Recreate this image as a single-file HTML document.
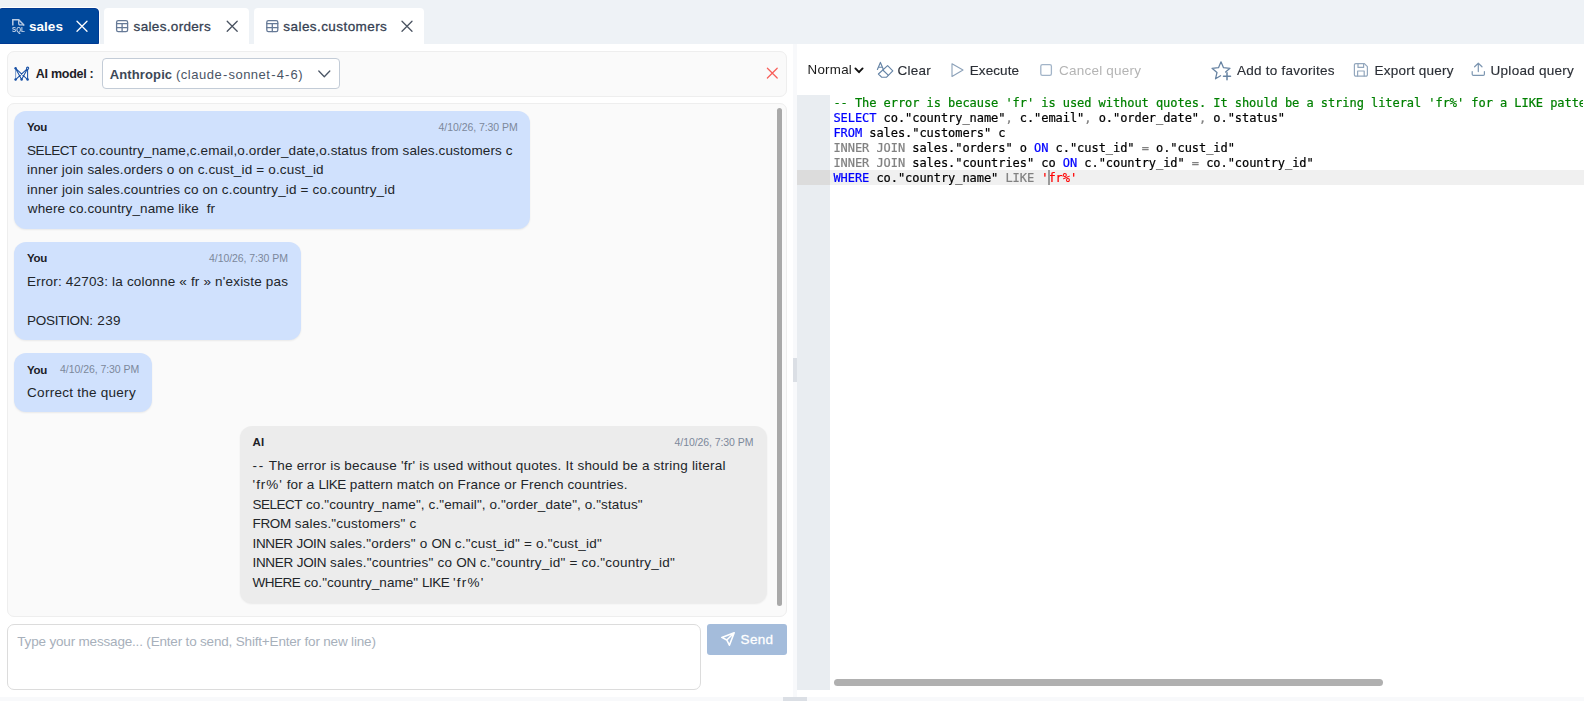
<!DOCTYPE html>
<html lang="en">
<head>
<meta charset="utf-8">
<title>sales - SQL console</title>
<style>
*{box-sizing:border-box;margin:0;padding:0}
html,body{width:1584px;height:704px;overflow:hidden;background:#fff}
body{font-family:"Liberation Sans",Arial,sans-serif;color:#212529;position:relative}
#app{position:absolute;left:0;top:0;width:1584px;height:704px;overflow:hidden;background:#fff}
.abs,.tx,svg.ic{position:absolute}
.tx{white-space:pre;line-height:1;display:block}
svg.ic{left:0;top:0;width:1584px;height:704px;overflow:visible;pointer-events:none}
.tabbar{position:absolute;left:0;top:0;width:1584px;height:44px;background:#eef2f6}
.tab{position:absolute;top:8px;height:36px;background:#fff;border-radius:4px 4px 0 0}
.tab.active{background:#00489b;border:1px solid #003a93;box-shadow:0 0 0 1px #fff}
.panel{position:absolute;background:#fafafa;border:1px solid #eeeeee;border-radius:7px}
.select{position:absolute;left:94px;top:6px;width:238px;height:31px;background:#fff;border:1px solid #c3ccd7;border-radius:4px}
.bubble{position:absolute;border-radius:12px;box-shadow:0 1px 2px rgba(0,0,0,.07)}
.bubble.you{background:#d0e1fd}
.bubble.ai{background:#ececec}
.vscroll{position:absolute;left:777px;top:108px;width:5px;height:498px;border-radius:3px;background:#a9a9a9}
.input{position:absolute;left:7px;top:624px;width:694px;height:66px;background:#fff;border:1px solid #dcdcdc;border-radius:7px}
.sendbtn{position:absolute;left:707px;top:624px;width:80px;height:31px;background:#a4bcdb;border-radius:3px}
.vsplit{position:absolute;left:793px;top:44px;width:4px;height:653px;background:#f8f9fb}
.vsplit i{position:absolute;left:0;top:314px;width:4px;height:24px;background:#dbdfe5}
.hsplit{position:absolute;left:0;top:697px;width:1584px;height:4px;background:#f8f9fb}
.hsplit i{position:absolute;left:783px;top:0;width:24px;height:4px;background:#dbdfe5}
.rightpane{position:absolute;left:0;top:0;width:1584px;height:704px;will-change:transform}
.toolbar{position:absolute;left:797px;top:44px;width:787px;height:51px}
.gutter{position:absolute;left:797px;top:95px;width:33px;height:595px;background:#e9edf1}
.gutter i{position:absolute;left:0;top:75px;width:33px;height:15px;background:#dcdcdc}
.activeline{position:absolute;left:830px;top:170px;width:754px;height:15px;background:#f0f0f0}
.code{position:absolute;left:833.4px;top:96px;letter-spacing:-0.057px;-webkit-text-stroke:0.22px;font-family:"DejaVu Sans Mono","Liberation Mono",monospace;font-size:12px;line-height:15px;white-space:pre;color:#000;width:750px;overflow:hidden}
.code div{height:15px}
.k{color:#0000ff}.g{color:#808080}.c{color:#008000}.s{color:#ff0000}
.cursor{position:absolute;left:1048px;top:170px;width:2px;height:15px;background:#9a9a9a}
.hscroll{position:absolute;left:834px;top:679px;width:549px;height:7px;border-radius:4px;background:#b0b0b0}
</style>
</head>
<body>
<div id="app">
  <!-- tab bar -->
  <div class="tabbar">
    <div class="tab active" style="left:-2px;width:101px"><span id="tab1" class="tx" style="left:30.08px;top:10.57px;font-size:13.5px;font-weight:700;color:#ffffff;letter-spacing:0.009px">sales</span></div>
    <div class="tab" style="left:104px;width:145px"><span id="tab2" class="tx" style="left:29.60px;top:11.57px;font-size:13.5px;font-weight:400;color:#364152;letter-spacing:0.323px;-webkit-text-stroke:0.3px">sales.orders</span></div>
    <div class="tab" style="left:254px;width:170px"><span id="tab3" class="tx" style="left:29.35px;top:11.57px;font-size:13.5px;font-weight:400;color:#364152;letter-spacing:0.427px;-webkit-text-stroke:0.3px">sales.customers</span></div>
  </div>

  <!-- left: AI assistant -->
  <div class="panel" style="left:7px;top:51px;width:780px;height:46px"><span id="ailabel" class="tx" style="left:27.85px;top:16.42px;font-size:12.5px;font-weight:700;color:#1d2127;letter-spacing:-0.278px">AI model :</span><div class="select"><span id="selb" class="tx" style="left:6.80px;top:9.00px;font-size:13px;font-weight:700;color:#3d4857;letter-spacing:0.114px">Anthropic</span><span id="selr" class="tx" style="left:73.00px;top:9.00px;font-size:13px;font-weight:400;color:#4a5565;letter-spacing:0.512px">(claude<span style="margin-left:0.65px;letter-spacing:1.162px">-</span>sonnet<span style="margin-left:0.65px;letter-spacing:1.162px">-</span>4<span style="margin-left:0.65px;letter-spacing:1.162px">-</span>6)</span></div></div>

  <div class="panel" style="left:7px;top:103px;width:780px;height:514px"></div>
  <div class="bubble you" style="left:14px;top:111px;width:516px;height:118px"><span id="b1you" class="tx" style="left:13.10px;top:11.27px;font-size:11.5px;font-weight:700;color:#1d2127;letter-spacing:-0.289px">You</span><span id="b1ts" class="tx" style="left:424.60px;top:11.11px;font-size:10.5px;font-weight:400;color:#7c889b;letter-spacing:-0.062px">4/10/26, 7:30 PM</span><span id="b1l1" class="tx" style="left:13.10px;top:32.57px;font-size:13.5px;font-weight:400;color:#212529;letter-spacing:0.119px"><span style="letter-spacing:-0.481px">SELECT</span> co.country_name,c.email,o.order_date,o.status from sales.customers c</span><span id="b1l2" class="tx" style="left:13.10px;top:51.57px;font-size:13.5px;font-weight:400;color:#212529;letter-spacing:0.162px">inner join sales.orders o on c.cust_id = o.cust_id</span><span id="b1l3" class="tx" style="left:13.10px;top:71.57px;font-size:13.5px;font-weight:400;color:#212529;letter-spacing:0.171px">inner join sales.countries co on c.country_id = co.country_id</span><span id="b1l4" class="tx" style="left:13.80px;top:90.57px;font-size:13.5px;font-weight:400;color:#212529;letter-spacing:0.118px">where co.country_name like  fr</span></div>
  <div class="bubble you" style="left:14px;top:242px;width:287px;height:97.5px"><span id="b2you" class="tx" style="left:13.10px;top:11.27px;font-size:11.5px;font-weight:700;color:#1d2127;letter-spacing:-0.289px">You</span><span id="b2ts" class="tx" style="left:195.10px;top:11.11px;font-size:10.5px;font-weight:400;color:#7c889b;letter-spacing:-0.078px">4/10/26, 7:30 PM</span><span id="b2l1" class="tx" style="left:13.10px;top:32.57px;font-size:13.5px;font-weight:400;color:#212529;letter-spacing:0.176px">Error: 42703: la colonne « fr » n'existe pas</span><span id="b2l3" class="tx" style="left:13.10px;top:71.57px;font-size:13.5px;font-weight:400;color:#212529;letter-spacing:0.305px"><span style="letter-spacing:-0.295px">POSITION</span>: 239</span></div>
  <div class="bubble you" style="left:14px;top:353px;width:138px;height:59px"><span id="b3you" class="tx" style="left:13.10px;top:12.27px;font-size:11.5px;font-weight:700;color:#1d2127;letter-spacing:-0.289px">You</span><span id="b3ts" class="tx" style="left:46.10px;top:11.11px;font-size:10.5px;font-weight:400;color:#7c889b;letter-spacing:-0.060px">4/10/26, 7:30 PM</span><span id="b3l1" class="tx" style="left:13.10px;top:32.57px;font-size:13.5px;font-weight:400;color:#212529;letter-spacing:0.265px">Correct the query</span></div>
  <div class="bubble ai" style="left:240px;top:426px;width:527px;height:176.5px"><span id="aiai" class="tx" style="left:12.60px;top:11.27px;font-size:11.5px;font-weight:700;color:#1d2127;letter-spacing:0.041px">AI</span><span id="aits" class="tx" style="left:434.60px;top:11.11px;font-size:10.5px;font-weight:400;color:#7c889b;letter-spacing:-0.078px">4/10/26, 7:30 PM</span><span id="ail1" class="tx" style="left:12.60px;top:32.57px;font-size:13.5px;font-weight:400;color:#212529;letter-spacing:0.219px"><span style="letter-spacing:1.719px">--</span> The error is because 'fr' is used without quotes. It should be a string literal</span><span id="ail2" class="tx" style="left:12.60px;top:51.57px;font-size:13.5px;font-weight:400;color:#212529;letter-spacing:0.156px"><span style="letter-spacing:0.956px">'fr%'</span> for a <span style="letter-spacing:-0.444px">LIKE</span> pattern match on France or French countries.</span><span id="ail3" class="tx" style="left:12.60px;top:71.57px;font-size:13.5px;font-weight:400;color:#212529;letter-spacing:0.101px"><span style="letter-spacing:-0.499px">SELECT</span> co."country_name", c."email", o."order_date", o."status"</span><span id="ail4" class="tx" style="left:12.60px;top:90.57px;font-size:13.5px;font-weight:400;color:#212529;letter-spacing:0.217px"><span style="letter-spacing:-0.383px">FROM</span> sales."customers" c</span><span id="ail5" class="tx" style="left:12.60px;top:110.57px;font-size:13.5px;font-weight:400;color:#212529;letter-spacing:0.208px"><span style="letter-spacing:-0.392px">INNER</span> <span style="letter-spacing:-0.392px">JOIN</span> sales."orders" o <span style="letter-spacing:-0.392px">ON</span> c."cust_id" = o."cust_id"</span><span id="ail6" class="tx" style="left:12.60px;top:129.57px;font-size:13.5px;font-weight:400;color:#212529;letter-spacing:0.233px"><span style="letter-spacing:-0.367px">INNER</span> <span style="letter-spacing:-0.367px">JOIN</span> sales."countries" co <span style="letter-spacing:-0.367px">ON</span> c."country_id" = co."country_id"</span><span id="ail7" class="tx" style="left:12.60px;top:149.57px;font-size:13.5px;font-weight:400;color:#212529;letter-spacing:0.063px"><span style="letter-spacing:-0.537px">WHERE</span> co."country_name" <span style="letter-spacing:-0.537px">LIKE</span> <span style="letter-spacing:1.263px">'fr%'</span></span></div>
  <div class="vscroll"></div>

  <div class="input"><span id="ph" class="tx" style="left:9.30px;top:9.57px;font-size:13.5px;font-weight:400;color:#a7b0bb;letter-spacing:-0.180px">Type your message... (Enter to send, Shift+Enter for new line)</span></div>
  <div class="sendbtn"><span id="send" class="tx" style="left:33.60px;top:8.57px;font-size:13.5px;font-weight:400;color:#ffffff;letter-spacing:0.319px;-webkit-text-stroke:0.3px">Send</span></div>

  <div class="vsplit"><i></i></div>

  <!-- right: SQL editor -->
  <div class="rightpane">
  <div class="toolbar"><span id="normal" class="tx" style="left:10.60px;top:18.71px;font-size:13.333px;font-weight:400;color:#1a1a1a;letter-spacing:0.245px">Normal</span><span id="clear" class="tx" style="left:100.60px;top:19.57px;font-size:13.5px;font-weight:400;color:#2b2f36;letter-spacing:0.202px;-webkit-text-stroke:0.15px">Clear</span><span id="exec" class="tx" style="left:172.74px;top:19.57px;font-size:13.5px;font-weight:400;color:#2b2f36;letter-spacing:0.089px;-webkit-text-stroke:0.15px">Execute</span><span id="cancel" class="tx" style="left:262.10px;top:19.57px;font-size:13.5px;font-weight:400;color:#b4b4b4;letter-spacing:0.213px">Cancel query</span><span id="fav" class="tx" style="left:440.10px;top:19.57px;font-size:13.5px;font-weight:400;color:#2b2f36;letter-spacing:0.233px;-webkit-text-stroke:0.15px">Add to favorites</span><span id="export" class="tx" style="left:577.60px;top:19.57px;font-size:13.5px;font-weight:400;color:#2b2f36;letter-spacing:0.205px;-webkit-text-stroke:0.15px">Export query</span><span id="upload" class="tx" style="left:693.57px;top:19.57px;font-size:13.5px;font-weight:400;color:#2b2f36;letter-spacing:0.271px;-webkit-text-stroke:0.15px">Upload query</span></div>
  <div class="gutter"><i></i></div>
  <div class="activeline"></div>
  <div class="code"><div><span class="c">-- The error is because 'fr' is used without quotes. It should be a string literal 'fr%' for a LIKE pattern match on France or French countries.</span></div><div><span class="k">SELECT</span> co."country_name"<span class="g">,</span> c."email"<span class="g">,</span> o."order_date"<span class="g">,</span> o."status"</div><div><span class="k">FROM</span> sales."customers" c</div><div><span class="g">INNER JOIN</span> sales."orders" o <span class="k">ON</span> c."cust_id" <span class="g">=</span> o."cust_id"</div><div><span class="g">INNER JOIN</span> sales."countries" co <span class="k">ON</span> c."country_id" <span class="g">=</span> co."country_id"</div><div><span class="k">WHERE</span> co."country_name" <span class="g">LIKE</span> <span class="s">'fr%'</span></div></div>
  <div class="cursor"></div>
  <div class="hscroll"></div>
  </div>

  <div class="hsplit"><i></i></div>

  <!-- icons -->
  <svg class="ic" viewBox="0 0 1584 704" fill="none" stroke-linecap="round" stroke-linejoin="round">
    <!--ICONS_START-->
    <!-- tab 1: sql file icon -->
    <g stroke="#b9cbe3" stroke-width="1.5" stroke-linejoin="miter" stroke-linecap="butt">
      <path d="M12.8 25.4V19.8H18.7L23.7 24.8V25.8"/>
      <path d="M18.7 19.8V23.6a1.2 1.2 0 0 0 1.2 1.2H23.7" stroke-width="1.3"/>
    </g>
    <text x="12" y="32" font-family="Liberation Sans, Arial, sans-serif" font-size="7" font-weight="700" fill="#c9d7ea" stroke="none" textLength="12.8" lengthAdjust="spacingAndGlyphs">SQL</text>
    <!-- tab close icons -->
    <path d="M77 21.3l10 10M87 21.3l-10 10" stroke="#ffffff" stroke-width="1.3"/>
    <path d="M227.2 21.3l10 10M237.2 21.3l-10 10" stroke="#4a5361" stroke-width="1.3"/>
    <path d="M402 21.3l10 10M412 21.3l-10 10" stroke="#4a5361" stroke-width="1.3"/>
    <!-- table icons -->
    <g stroke="#667a97" stroke-width="1.3">
      <rect x="116.6" y="20.6" width="11" height="11" rx="1.6"/>
      <path d="M116.6 23.6h11M116.6 27.6h11M122.1 23.6v8"/>
      <rect x="266.8" y="20.6" width="11" height="11" rx="1.6"/>
      <path d="M266.8 23.6h11M266.8 27.6h11M272.3 23.6v8"/>
    </g>
    <!-- AI model icon -->
    <g stroke="#1a52a6" stroke-width="1.05">
      <path d="M15.6 68.4V79.6" stroke-opacity=".55"/>
      <path d="M27.6 68.4V79.6M15.6 68.4L21.6 79.6M15.6 68.4L27.6 79.6M27.6 68.4L21.6 79.6M27.6 68.4L15.6 79.6"/>
      <circle cx="27.6" cy="68.2" r="1.1" fill="#fafafa"/>
    </g>
    <g fill="#1a52a6" stroke="none">
      <circle cx="15.6" cy="68.2" r="1.2"/>
      <circle cx="15.6" cy="79.6" r="1.25"/><circle cx="21.6" cy="79.6" r="1.25"/><circle cx="27.6" cy="79.6" r="1.25"/>
    </g>
    <!-- select chevron -->
    <path d="M318.8 71l5.5 5.8 5.5-5.8" stroke="#4a5565" stroke-width="1.3"/>
    <!-- red close -->
    <path d="M767.4 68.2l9.8 9.8M777.2 68.2l-9.8 9.8" stroke="#f8605b" stroke-width="1.25"/>
    <!-- send icon -->
    <path d="M734.2 632.8l-12.4 4.6 5 2.6 2.6 5.2zM726.8 640l7.4-7.2" stroke="#ffffff" stroke-width="1.6"/>
    <!-- Normal select chevron -->
    <path d="M855.4 68.4l3.6 3.8 3.6-3.8" stroke="#111111" stroke-width="1.9"/>
    <!-- clear icon -->
    <g stroke="#6584a6" stroke-width="1.15">
      <path d="M877.4 69.4l3-7 3 7M878.5 67.2h3.8"/>
      <path d="M887.6 65.6l5.2 5.2-6.2 6.4h-5l-3.2-3.2z"/>
      <path d="M882.8 70l5.4 5.2"/>
    </g>
    <!-- execute icon -->
    <path d="M952 63.8v12.6l11-6.3z" stroke="#8ba1b9" stroke-width="1.1"/>
    <!-- cancel icon -->
    <rect x="1040.8" y="64.6" width="10.6" height="10.8" rx="1.6" stroke="#a2b4c8" stroke-width="1.3"/>
    <!-- star add -->
    <g stroke="#6783a2" stroke-width="1.25">
      <path d="M1225.6 72L1230 68.3L1223.5 67.7L1221 61.8L1218.5 67.7L1212 68.3L1217 72.5L1215.5 78.8L1220.6 75.7"/>
      <path d="M1227 72.7v7M1223.5 76.2h7" stroke-width="1.5"/>
    </g>
    <!-- save icon -->
    <g stroke="#93a7bd" stroke-width="1.2">
      <path d="M1355.8 63.6h8.6l3 3v8.2a1.4 1.4 0 0 1-1.4 1.4h-10.2a1.4 1.4 0 0 1-1.4-1.4v-9.8a1.4 1.4 0 0 1 1.4-1.4z"/>
      <path d="M1358 63.8v3.6h5.6v-3.6M1357.6 76v-5h6.6v5"/>
    </g>
    <!-- upload icon -->
    <g stroke="#7d96b1" stroke-width="1.2">
      <path d="M1472.2 71.6v2.6a1.2 1.2 0 0 0 1.2 1.2h9.8a1.2 1.2 0 0 0 1.2-1.2v-2.6"/>
      <path d="M1478.3 71.6v-8M1474.6 66.8l3.7-3.6 3.7 3.6"/>
    </g>
    <!--ICONS_END-->
  </svg>
</div>
</body>
</html>
